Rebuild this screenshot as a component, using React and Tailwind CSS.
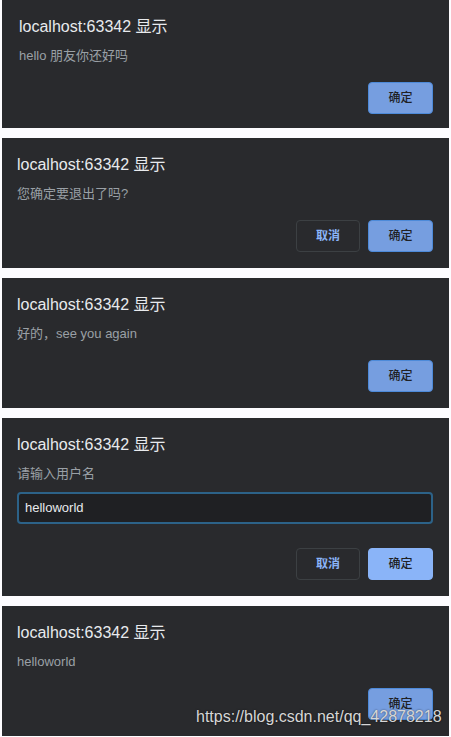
import React from "react";

const font = { fontFamily: '"Liberation Sans", "Noto Sans CJK SC", sans-serif' };

function ConfirmButton({ focused }) {
  return (
    <button
      className={
        focused
          ? "h-8 w-[65px] rounded-[4px] border border-[#8ab4f8] bg-[#8ab4f8] text-[12px] font-medium text-[#202124]"
          : "h-8 w-[65px] rounded-[4px] border border-[#4d8ad9] bg-[#769ee0] text-[12px] font-medium text-[#202124]"
      }
    >
      确定
    </button>
  );
}

function CancelButton() {
  return (
    <button className="h-8 w-[64px] rounded-[4px] border border-[#3c4043] bg-transparent text-[12px] font-semibold text-[#8ab4f8]">
      取消
    </button>
  );
}

function Dialog({ message, cancel, input, focused, className = "" }) {
  return (
    <div className={`flex flex-col bg-[#292a2d] pr-[16px] pt-[17px] ${className}`}>
      <div className="text-[16px] leading-[20px] text-[#e8eaed]">localhost:63342 显示</div>
      <div className="mt-[9px] text-[13px] leading-[20px] text-[#9aa0a6]">{message}</div>
      {input && (
        <div className="mt-[8px] flex h-8 items-center rounded-[4px] border-2 border-[#2c6288] bg-[#1f2023] pl-[6px] text-[13px] text-[#e8eaed]">
          {input}
        </div>
      )}
      <div className={`flex justify-end gap-2 ${input ? "mt-[24px]" : "mt-[16px]"}`}>
        {cancel && <CancelButton />}
        <ConfirmButton focused={focused} />
      </div>
    </div>
  );
}

export default function App() {
  return (
    <div style={font} className="relative h-[737px] w-[451px] overflow-hidden bg-[#fdfcff]">
      <div className="flex flex-col gap-[10px] px-[2px]">
        <Dialog message="hello 朋友你还好吗" className="h-[128px] pl-[17px]" />
        <Dialog message="您确定要退出了吗?" cancel className="h-[130px] pl-[15px]" />
        <Dialog message="好的，see you again" className="h-[130px] pl-[15px]" />
        <Dialog message="请输入用户名" input="helloworld" cancel focused className="h-[178px] pl-[15px]" />
        <Dialog message="helloworld" className="h-[130px] pl-[15px]" />
      </div>

      {/* watermark */}
      <div className="absolute left-[196px] top-[707px] text-[16px] leading-[20px] text-[#d6d6d6] [text-shadow:0_0_2px_rgba(0,0,0,0.6)]">
        https://blog.csdn.net/qq_42878218
      </div>
    </div>
  );
}
